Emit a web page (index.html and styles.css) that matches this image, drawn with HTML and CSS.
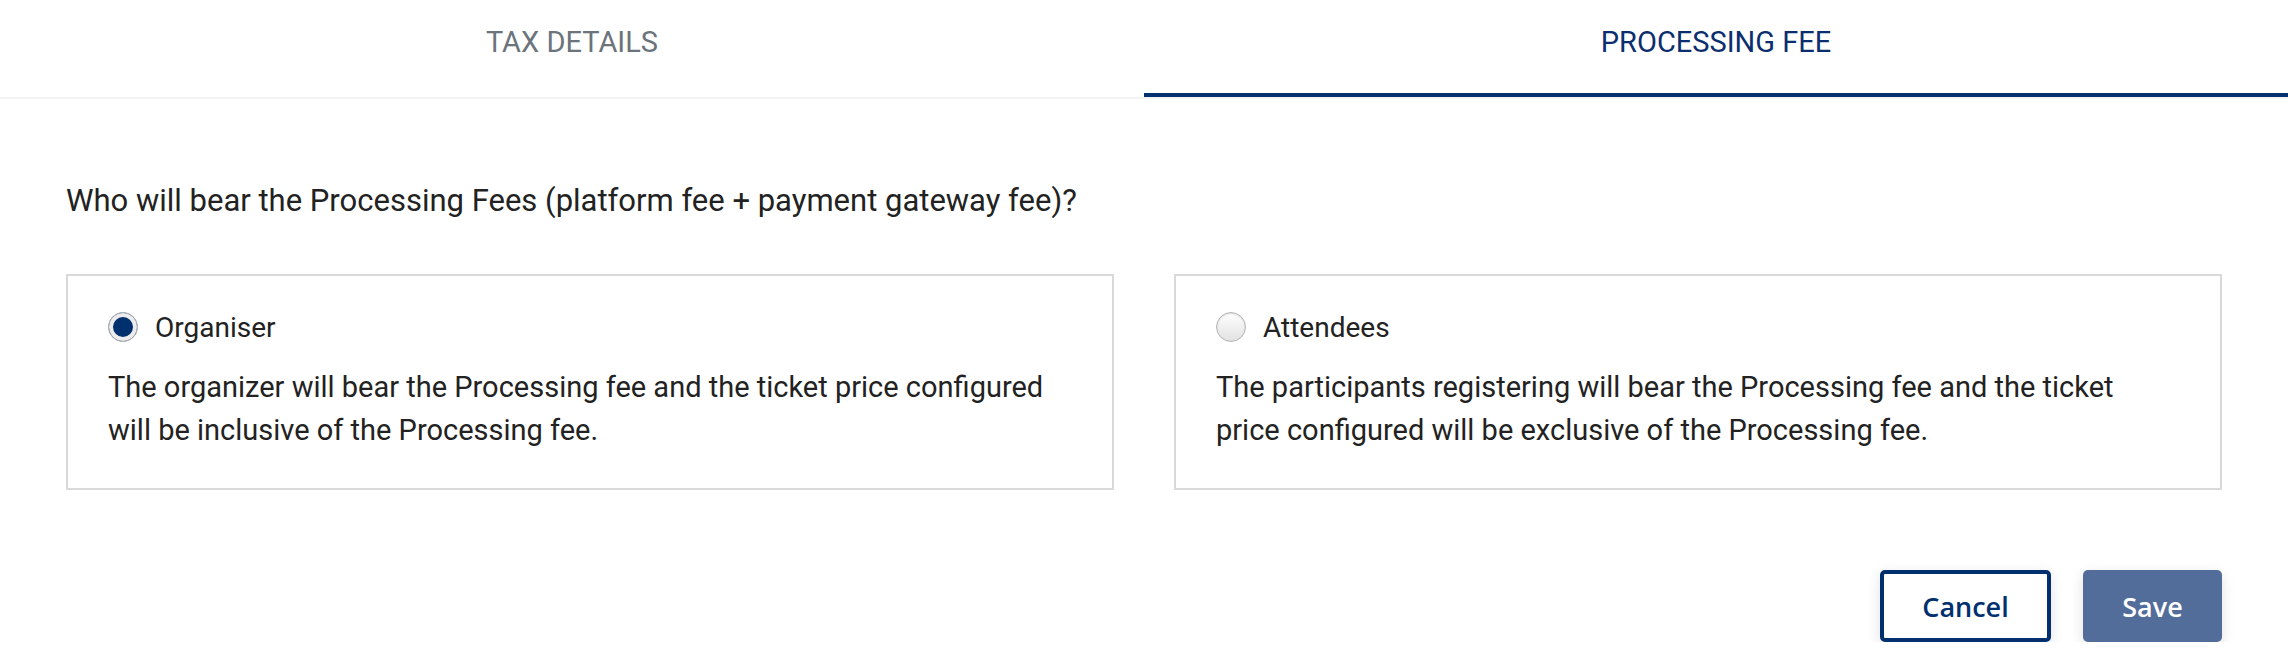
FILE: index.html
```html
<!DOCTYPE html>
<html>
<head>
	<title>Processing Fee</title>
	<link rel="stylesheet" href="styles.css">
</head>
<body>

	<div class = "tabs">
		<div class = "tab">TAX DETAILS</div>
		<div class = "tab active">PROCESSING FEE</div>
	</div>

	<div class = "content">
		<p class = "question">Who will bear the Processing Fees (platform fee + payment gateway fee)?</p>

		<div class = "options">
			<div class = "card">
				<div class = "choice">
					<span class = "radio checked"></span>
					<span class = "choiceLabel">Organiser</span>
				</div>
				<p class = "desc">The organizer will bear the Processing fee and the ticket price configured will be inclusive of the Processing fee.</p>
			</div>
			<div class = "card">
				<div class = "choice">
					<span class = "radio"></span>
					<span class = "choiceLabel">Attendees</span>
				</div>
				<p class = "desc">The participants registering will bear the Processing fee and the ticket price configured will be exclusive of the Processing fee.</p>
			</div>
		</div>

		<div class = "actions">
			<button class = "btn cancel">Cancel</button>
			<button class = "btn save">Save</button>
		</div>
	</div>

</body>
</html>
```

FILE: styles.css
```css
body {
	margin : 0;
	background : white;
	font-family : Roboto, "Open Sans", sans-serif;
	color : #222222;
}
.tabs {
	display : flex;
	border-bottom : 2px solid #f2f2f2;
}
.tab {
	flex : 1;
	text-align : center;
	height : 97px;
	padding-top : 25px;
	box-sizing : border-box;
	font-size : 29px;
	color : #6b737b;
	border-bottom : 4px solid transparent;
}
.tab.active {
	color : #0b2e6f;
	border-bottom-color : #00306e;
}
.content {
	padding : 0 66px;
}
.question {
	margin : 82px 0 54px 0;
	font-size : 31px;
	line-height : 39px;
}
.options {
	display : grid;
	grid-template-columns : 1fr 1fr;
	gap : 60px;
}
.card {
	border : 2px solid #d9d9d9;
	padding : 36px 40px 36px 40px;
}
.choice {
	display : flex;
	align-items : center;
	gap : 17px;
	height : 30px;
}
.choiceLabel {
	font-size : 28px;
}
.radio {
	width : 30px;
	height : 30px;
	border-radius : 50%;
	box-sizing : border-box;
	border : 1px solid #b5b5b5;
	background : linear-gradient(#ffffff, #e2e2e2);
	box-shadow : inset 0 1px 2px rgba(0, 0, 0, 0.15);
}
.radio.checked {
	background : #00306e;
	box-shadow : inset 0 0 0 4px #ececec;
}
.desc {
	margin : 24px 0 0 0;
	font-size : 29px;
	line-height : 43px;
}
.actions {
	display : flex;
	justify-content : flex-end;
	gap : 32px;
	margin-top : 80px;
}
.btn {
	height : 72px;
	border-radius : 5px;
	font-family : "Open Sans", sans-serif;
	font-size : 27px;
	font-weight : 600;
	box-shadow : 0 4px 14px rgba(0, 0, 0, 0.12);
}
.cancel {
	width : 171px;
	background : white;
	border : 4px solid #00306e;
	color : #00306e;
}
.save {
	width : 139px;
	background : #536d9b;
	border : none;
	color : white;
}
```
